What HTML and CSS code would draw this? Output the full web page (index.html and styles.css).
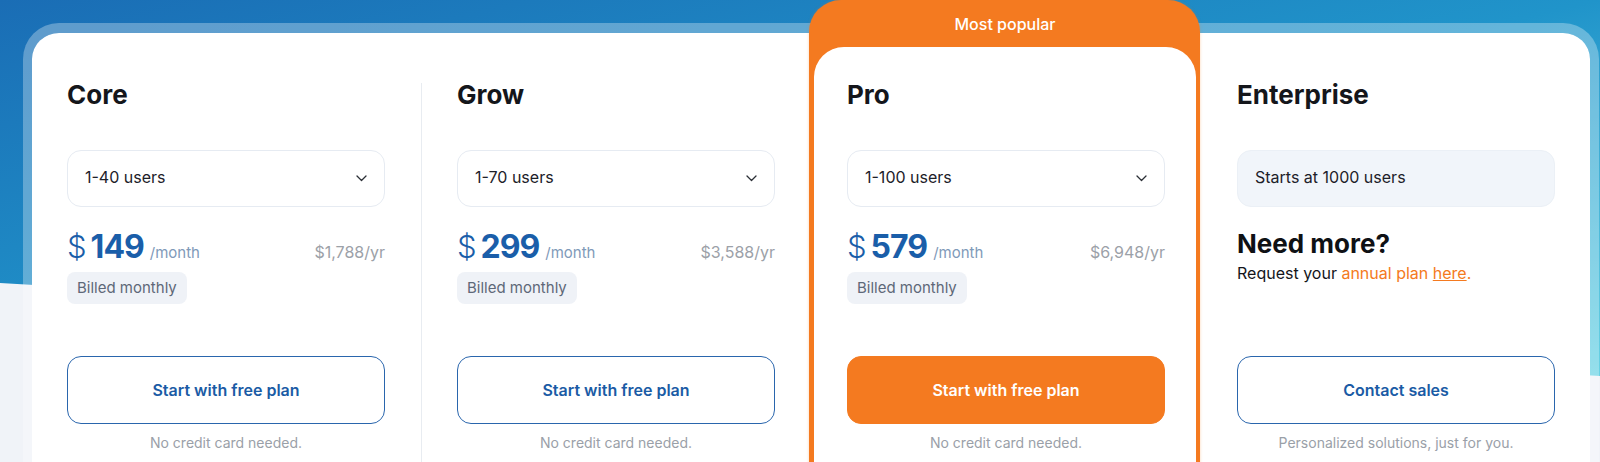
FILE: index.html
```html
<!DOCTYPE html>
<html lang="en">
<head>
<meta charset="utf-8">
<title>Pricing plans</title>
<link rel="stylesheet" href="styles.css">
</head>
<body>
<div class="page">
  <section class="plans">
    <div class="plan">
      <h2 class="plan__title">Core</h2>
      <div class="select">
        <span>1-40 users</span>
        <svg class="chev" width="11" height="7" viewBox="0 0 11 7"><path d="M1 1l4.5 4.5L10 1" fill="none" stroke="#2b2f36" stroke-width="1.3" stroke-linecap="round" stroke-linejoin="round"/></svg>
      </div>
      <div class="details">
        <div class="price">
          <div class="price__main"><span class="currency">$</span><span class="amount">149</span><span class="period">/month</span></div>
          <span class="yearly">$1,788/yr</span>
        </div>
        <span class="badge">Billed monthly</span>
      </div>
      <a class="btn">Start with free plan</a>
      <p class="note">No credit card needed.</p>
    </div>

    <div class="plan plan--grow">
      <h2 class="plan__title">Grow</h2>
      <div class="select">
        <span>1-70 users</span>
        <svg class="chev" width="11" height="7" viewBox="0 0 11 7"><path d="M1 1l4.5 4.5L10 1" fill="none" stroke="#2b2f36" stroke-width="1.3" stroke-linecap="round" stroke-linejoin="round"/></svg>
      </div>
      <div class="details">
        <div class="price">
          <div class="price__main"><span class="currency">$</span><span class="amount">299</span><span class="period">/month</span></div>
          <span class="yearly">$3,588/yr</span>
        </div>
        <span class="badge">Billed monthly</span>
      </div>
      <a class="btn">Start with free plan</a>
      <p class="note">No credit card needed.</p>
    </div>

    <div class="plan plan--pro">
      <div class="pro-badge">Most popular</div>
      <div class="pro-body">
        <h2 class="plan__title">Pro</h2>
        <div class="select">
          <span>1-100 users</span>
          <svg class="chev" width="11" height="7" viewBox="0 0 11 7"><path d="M1 1l4.5 4.5L10 1" fill="none" stroke="#2b2f36" stroke-width="1.3" stroke-linecap="round" stroke-linejoin="round"/></svg>
        </div>
        <div class="details">
          <div class="price">
            <div class="price__main"><span class="currency">$</span><span class="amount">579</span><span class="period">/month</span></div>
            <span class="yearly">$6,948/yr</span>
          </div>
          <span class="badge">Billed monthly</span>
        </div>
        <a class="btn btn--primary">Start with free plan</a>
        <p class="note">No credit card needed.</p>
      </div>
    </div>

    <div class="plan plan--enterprise">
      <h2 class="plan__title">Enterprise</h2>
      <div class="select select--static">
        <span>Starts at 1000 users</span>
      </div>
      <div class="details details--enterprise">
        <h3 class="need">Need more?</h3>
        <p class="request">Request your <span class="accent">annual plan <u>here</u>.</span></p>
      </div>
      <a class="btn">Contact sales</a>
      <p class="note">Personalized solutions, just for you.</p>
    </div>
  </section>
</div>
</body>
</html>
```

FILE: styles.css
```css
html, body {
  margin: 0;
  height: 100%;
  overflow: hidden;
}

body {
  font-family: Inter, "Noto Sans", sans-serif;
  background: #f0f3f8;
  color: #14161b;
}

.page {
  position: relative;
  height: 462px;
  overflow: hidden;
  padding: 23px 1px 0 23px;
  box-sizing: border-box;
}

.page::before {
  content: "";
  position: absolute;
  left: 0;
  top: 0;
  right: 0;
  height: 376px;
  background: linear-gradient(to bottom right, #1a6db5 0%, #2094ca 50%, #68d2e4 100%);
  clip-path: polygon(0 0, 100% 0, 100% 100%, 0 283px);
}

.plans {
  position: relative;
  display: grid;
  grid-template-columns: repeat(4, 318px);
  column-gap: 72px;
  padding: 46px 35px 40px;
  background: #fff;
  background-clip: padding-box;
  border: 9px solid rgba(255, 255, 255, 0.3);
  border-top-width: 10px;
  border-bottom: 0;
  border-radius: 36px 36px 0 0;
}

.plan {
  position: relative;
  display: flex;
  flex-direction: column;
}

.plan--grow::before {
  content: "";
  position: absolute;
  left: -36px;
  top: 4px;
  bottom: -40px;
  width: 1px;
  background: #e8ecf1;
}

.plan__title {
  margin: 0 0 39px;
  font-size: 26px;
  line-height: 32px;
  font-weight: 700;
  color: #14161b;
}

.select {
  height: 57px;
  box-sizing: border-box;
  border: 1px solid #e6ebf2;
  border-radius: 14px;
  display: flex;
  align-items: center;
  justify-content: space-between;
  padding: 0 17px 3px;
  font-size: 16px;
  color: #1d2129;
}

.select .chev {
  margin-top: 3px;
}

.select--static {
  background: #f1f5fa;
  border-color: #ebf0f6;
}

.chev {
  display: block;
}

.details {
  height: 149px;
  box-sizing: border-box;
  padding-top: 22px;
}

.price {
  display: flex;
  align-items: baseline;
  justify-content: space-between;
  height: 36px;
}

.price__main {
  display: flex;
  align-items: baseline;
  color: #1a5ea9;
}

.currency {
  font-size: 31px;
  line-height: 36px;
  font-weight: 300;
  margin-right: 4px;
}

.amount {
  font-size: 32px;
  line-height: 36px;
  font-weight: 700;
  letter-spacing: -1px;
}

.period {
  font-size: 15px;
  color: #7f9ab9;
  margin-left: 6px;
}

.yearly {
  font-size: 16px;
  color: #9ca1a8;
  margin-bottom: 3px;
}

.badge {
  display: inline-block;
  margin-top: 7px;
  height: 32px;
  line-height: 32px;
  padding: 0 10px;
  border-radius: 8px;
  background: #eff2f7;
  color: #5e6878;
  font-size: 15px;
}

.details--enterprise {
  padding-top: 22px;
}

.need {
  margin: 0;
  font-size: 26px;
  line-height: 30px;
  font-weight: 700;
  color: #0f1115;
}

.request {
  margin: 3px 0 0;
  font-size: 16px;
  line-height: 22px;
  color: #14161b;
}

.accent {
  color: #f47a20;
}

.btn {
  height: 68px;
  box-sizing: border-box;
  border: 1px solid #2a66ad;
  border-radius: 14px;
  display: flex;
  align-items: center;
  justify-content: center;
  font-size: 16px;
  font-weight: 600;
  color: #1a5ba5;
  background: #fff;
  cursor: pointer;
}

.btn--primary {
  background: #f47a20;
  border-color: #f47a20;
  color: #fff;
}

.note {
  margin: 9px 0 0;
  text-align: center;
  font-size: 14px;
  line-height: 20px;
  color: #9aa0a8;
}

.plan--pro {
  margin: -79px -35px -40px -38px;
  background: #f47a20;
  border-radius: 32px 32px 0 0;
  padding: 0 4px 0 5px;
  box-shadow: 0 0 3px rgba(244, 122, 32, 0.35);
}

.pro-badge {
  height: 47px;
  display: flex;
  align-items: center;
  justify-content: center;
  color: #fff;
  font-size: 16px;
  font-weight: 500;
}

.pro-body {
  flex: 1;
  display: flex;
  flex-direction: column;
  background: #fff;
  border-radius: 30px 30px 0 0;
  padding: 32px 31px 0 33px;
}
```
